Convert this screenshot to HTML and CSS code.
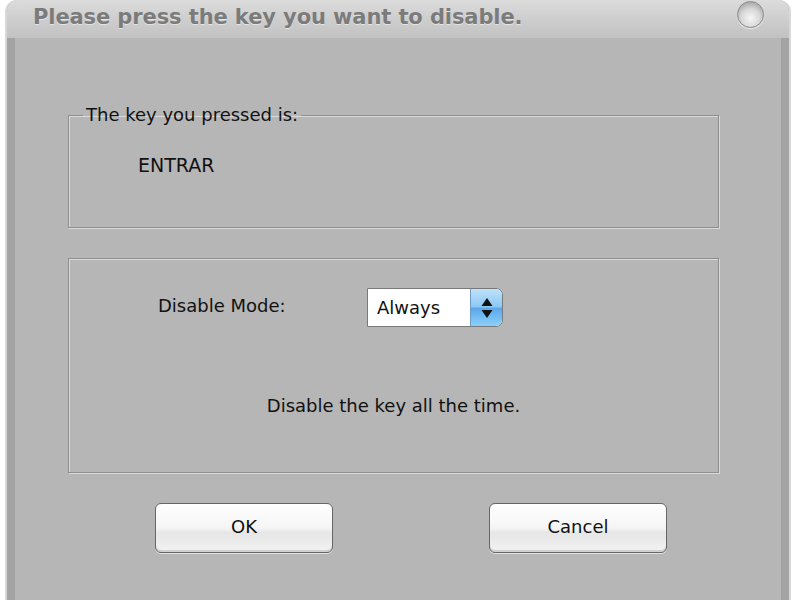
FILE: index.html
```html
<!DOCTYPE html>
<html>
<head>
<meta charset="utf-8">
<link rel="stylesheet" href="styles.css">
</head>
<body>
<div class="window">
  <div class="titlebar">
    <span class="title">Please press the key you want to disable.</span>
    <span class="close"></span>
  </div>
  <div class="content">
    <fieldset class="group group-key">
      <legend>The key you pressed is:</legend>
      <div class="keyname">ENTRAR</div>
    </fieldset>
    <fieldset class="group group-mode">
      <div class="mode-row">
        <span class="label">Disable Mode:</span>
        <div class="select">
          <span class="select-text">Always</span>
          <span class="spin">
            <svg width="14" height="24" viewBox="0 0 14 24"><path d="M7 2 L12.5 10 L1.5 10 Z" fill="#111"/><path d="M7 22 L12.5 14 L1.5 14 Z" fill="#111"/></svg>
          </span>
        </div>
      </div>
      <div class="desc">Disable the key all the time.</div>
    </fieldset>
    <div class="buttons">
      <button class="btn">OK</button>
      <button class="btn">Cancel</button>
    </div>
  </div>
</div>
</body>
</html>
```
FILE: styles.css
```css
html, body {
  margin: 0;
  padding: 0;
  background: #ffffff;
  width: 800px;
  height: 600px;
  overflow: hidden;
}
.window {
  margin-left: 5px;
  width: 786px;
  height: 600px;
  box-sizing: border-box;
  background: #b6b6b6;
  border-radius: 12px 12px 0 0;
  border-left: 2px solid #d8d8d8;
  border-right: 2px solid #d8d8d8;
  display: flex;
  flex-direction: column;
  overflow: hidden;
  font-family: "DejaVu Sans", Verdana, sans-serif;
}
.titlebar {
  height: 38px;
  flex: none;
  display: flex;
  align-items: center;
  justify-content: space-between;
  padding: 0 25px 4px 26px;
  box-sizing: border-box;
  background: linear-gradient(to bottom, #dcdcdc 0%, #cfcfcf 45%, #c2c2c2 100%);
}
.title {
  font-weight: bold;
  font-size: 21px;
  color: #7b7b7b;
  letter-spacing: -0.1px;
  text-shadow: 0 1px 0 #e4e4e4;
}
.close {
  width: 25px;
  height: 25px;
  border-radius: 50%;
  margin-top: -6px;
  background: radial-gradient(circle at 50% 65%, #f6f6f6 0%, #d8d8d8 45%, #a9a9a9 80%);
  border: 1px solid #8a8a8a;
  box-shadow: 0 1px 1px #eee;
}
.content {
  flex: 1;
  background: #b6b6b6;
  border-left: 8px solid #a3a3a3;
  border-right: 8px solid #a3a3a3;
  padding: 66px 0 0 53px;
  box-sizing: border-box;
  display: flex;
  flex-direction: column;
  font-size: 18px;
  color: #111;
}
.group {
  margin: 0;
  width: 651px;
  box-sizing: border-box;
  border: 1px solid #8e8e8e;
  box-shadow: 1px 1px 0 #dadada, inset 1px 1px 0 #dadada;
  padding: 0;
}
.group legend {
  margin-left: 14px;
  padding: 0 3px;
  line-height: 22px;
  color: #111;
}
.group-key {
  height: 124px;
}
.keyname {
  padding: 28px 0 0 69px;
  line-height: 22px;
  font-size: 19px;
}
.group-mode {
  margin-top: 30px;
  height: 215px;
  padding-top: 29px;
}
.mode-row {
  display: flex;
  align-items: center;
}
.label {
  margin-left: 89px;
  width: 209px;
  margin-top: -4px;
}
.select {
  width: 136px;
  height: 39px;
  box-sizing: border-box;
  display: flex;
  border: 1px solid #7a7a7a;
  border-radius: 0 7px 7px 0;
  overflow: hidden;
  background: #fff;
}
.select-text {
  flex: 1;
  padding-left: 9px;
  line-height: 37px;
  background: #fff;
}
.spin {
  width: 31px;
  display: flex;
  align-items: center;
  justify-content: center;
  background: linear-gradient(to bottom, #bfe2fb 0%, #8cc8f4 48%, #5aa8ea 52%, #8dd0fa 100%);
  border-left: 1px solid #6f9cc4;
}
.desc {
  margin-top: 68px;
  text-align: center;
  line-height: 22px;
}
.buttons {
  display: flex;
  margin-top: 30px;
  padding-left: 87px;
  gap: 156px;
}
.btn {
  width: 178px;
  height: 50px;
  box-sizing: border-box;
  font-family: "DejaVu Sans", Verdana, sans-serif;
  font-size: 18px;
  color: #111;
  border: 1px solid #666;
  border-radius: 6px;
  background: linear-gradient(to bottom, #ffffff 0%, #f5f5f5 50%, #e6e6e6 60%, #f2f2f2 100%);
  box-shadow: inset 0 -2px 0 #d0d0d0, 0 1px 0 #e2e2e2;
  padding: 0 0 3px 0;
}
```
